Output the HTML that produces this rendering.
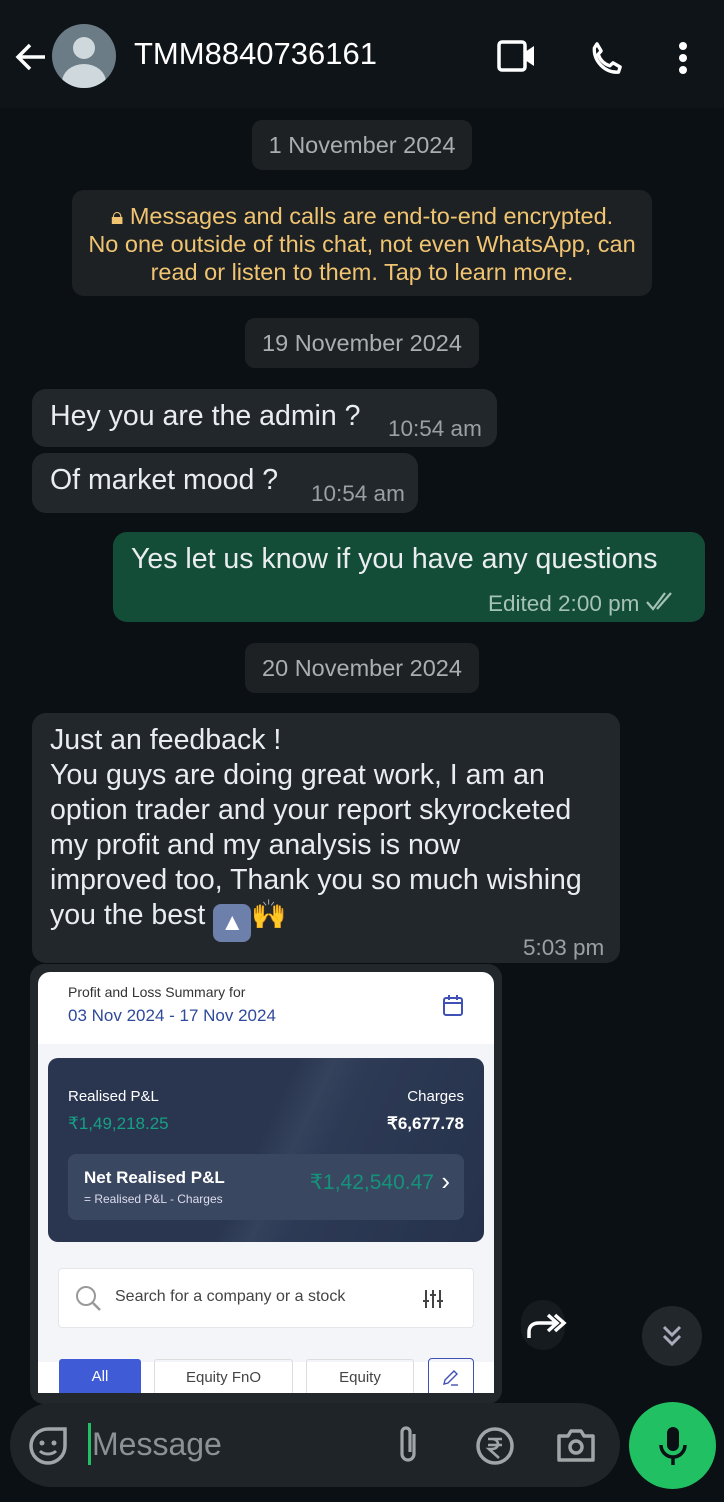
<!DOCTYPE html>
<html><head><meta charset="utf-8"><style>
*{margin:0;padding:0;box-sizing:border-box}
body{width:724px;height:1502px;background:#0b1014;font-family:"Liberation Sans","Noto Sans CJK JP",sans-serif;position:relative;overflow:hidden;color:#e9edef}
.a{position:absolute}
.chip{position:absolute;background:#1d2124;color:#a9aeb1;font-size:23.5px;border-radius:10px;text-align:center;line-height:50px}
.in{position:absolute;background:#22272b;border-radius:14px;color:#e9edef;font-size:28.5px}
.t{position:absolute;color:#9aa0a4;font-size:22.5px}
</style></head><body>
<div class="a" style="left:0;top:0;width:724px;height:108px;background:#0f1418"></div>
<svg class="a" style="top:40px;left:14px" width="34" height="34" viewBox="0 0 34 34"><path d="M31 17H5M16 5L4 17l12 12" stroke="#fff" stroke-width="3.5" fill="none"/></svg>
<div class="a" style="left:52px;top:24px;width:64px;height:64px;border-radius:50%;background:#6b7c86;overflow:hidden">
<div class="a" style="left:21px;top:13px;width:22px;height:22px;border-radius:50%;background:#cfd8dc"></div>
<div class="a" style="left:10px;top:40px;width:44px;height:36px;border-radius:50%;background:#cfd8dc"></div></div>
<div class="a" style="left:134px;top:36px;font-size:31px;color:#fff">TMM8840736161</div>
<svg class="a" style="left:496px;top:38px" width="42" height="36" viewBox="0 0 42 36"><rect x="3" y="4" width="26" height="28" rx="3" stroke="#fff" stroke-width="3.5" fill="none"/><path d="M29 14l9-6v20l-9-6z" fill="#fff"/></svg>
<svg class="a" style="left:586px;top:38px" width="40" height="40" viewBox="0 0 24 24"><path d="M6.6 3.5l2.5 4.3-1.8 2a11 11 0 0 0 6.9 6.9l2-1.8 4.3 2.5-1 3.1c-8 .5-15-6.5-14.5-14.5z" stroke="#fff" stroke-width="2" fill="none" stroke-linejoin="round"/></svg>
<div class="a" style="left:679px;top:42px;width:8px;height:8px;border-radius:50%;background:#fff;box-shadow:0 12px 0 #fff,0 24px 0 #fff"></div>

<div class="chip" style="left:252px;top:120px;width:220px">1 November 2024</div>
<div class="a" style="left:72px;top:190px;width:580px;height:106px;background:#1d2124;border-radius:12px;color:#f0c471;font-size:23.5px;text-align:center;line-height:28px;padding-top:12px;white-space:nowrap">🔒︎ Messages and calls are end-to-end encrypted.<br>No one outside of this chat, not even WhatsApp, can<br>read or listen to them. Tap to learn more.</div>
<div class="chip" style="left:245px;top:318px;width:234px">19 November 2024</div>

<div class="in" style="left:32px;top:389px;width:465px;height:58px"><span class="a" style="left:18px;top:11px">Hey you are the admin ?</span><span class="t" style="left:356px;top:27px">10:54 am</span></div>
<div class="in" style="left:32px;top:453px;width:386px;height:60px"><span class="a" style="left:18px;top:11px">Of market mood ?</span><span class="t" style="left:279px;top:28px">10:54 am</span></div>
<div class="in" style="left:113px;top:532px;width:592px;height:90px;background:#144d37"><span class="a" style="left:18px;top:11px;white-space:nowrap">Yes let us know if you have any questions</span><span class="t" style="left:375px;top:59px;color:#a5c2b6">Edited 2:00 pm</span>
<svg class="a" style="left:532px;top:58px" width="32" height="22" viewBox="0 0 32 22"><path d="M2 12l6 7L20 3M12 19L26 3" stroke="#a5c2b6" stroke-width="2.2" fill="none"/></svg></div>
<div class="chip" style="left:245px;top:643px;width:234px">20 November 2024</div>

<div class="in" style="left:32px;top:713px;width:588px;height:250px;line-height:35px"><div class="a" style="left:18px;top:10px;width:570px;white-space:nowrap">Just an feedback !<br>You guys are doing great work, I am an<br>option trader and your report skyrocketed<br>my profit and my analysis is now<br>improved too, Thank you so much wishing<br>you the best <span style="display:inline-block;width:38px;height:38px;background:#6d7fab;border-radius:8px;vertical-align:-6px;text-align:center;color:#fff;font-size:24px;line-height:38px">▲</span>🙌</div><span class="t" style="left:491px;top:217px">5:03 pm</span></div>

<div class="in" style="left:30px;top:964px;width:472px;height:440px"></div>
<div class="a" style="left:38px;top:972px;width:456px;height:421px;background:#fff;border-radius:12px 12px 0 0;overflow:hidden">
<div class="a" style="left:30px;top:12px;font-size:14px;color:#333">Profit and Loss Summary for</div>
<div class="a" style="left:30px;top:34px;font-size:17px;color:#2f4a9a">03 Nov 2024 - 17 Nov 2024</div>
<svg class="a" style="left:404px;top:22px" width="22" height="24" viewBox="0 0 22 24"><rect x="2" y="4" width="18" height="17" rx="2" stroke="#3f51b5" stroke-width="2" fill="none"/><path d="M2 9h18M7 1v5M15 1v5" stroke="#3f51b5" stroke-width="2"/></svg>
<div class="a" style="left:0;top:72px;width:456px;height:318px;background:#f3f5f9"></div>
<div class="a" style="left:10px;top:86px;width:436px;height:184px;background:linear-gradient(115deg,#2a3650 48%,#35425c 55%,#2d3a55 62%,#26324b);border-radius:10px">
<div class="a" style="left:20px;top:30px;font-size:15px;color:#fff">Realised P&amp;L</div>
<div class="a" style="left:20px;top:56px;font-size:17px;color:#16a085">₹1,49,218.25</div>
<div class="a" style="right:20px;top:30px;font-size:15px;color:#fff">Charges</div>
<div class="a" style="right:20px;top:56px;font-size:17px;color:#fff;font-weight:bold">₹6,677.78</div>
<div class="a" style="left:20px;top:96px;width:396px;height:66px;background:#3a4761;border-radius:8px">
<div class="a" style="left:16px;top:14px;font-size:17px;color:#fff;font-weight:bold">Net Realised P&amp;L</div>
<div class="a" style="left:16px;top:38px;font-size:12px;color:#dde">= Realised P&amp;L - Charges</div>
<div class="a" style="right:30px;top:16px;font-size:21px;color:#14937a">₹1,42,540.47</div>
<div class="a" style="right:14px;top:12px;font-size:26px;color:#fff">›</div></div></div>
<div class="a" style="left:20px;top:296px;width:416px;height:60px;background:#fff;border:1px solid #e4e6ea;border-radius:4px">
<svg class="a" style="left:16px;top:16px" width="28" height="28" viewBox="0 0 28 28"><circle cx="11" cy="11" r="9" stroke="#999" stroke-width="2" fill="none"/><path d="M18 18l7 7" stroke="#999" stroke-width="2.5"/></svg>
<div class="a" style="left:56px;top:19px;font-size:16px;color:#444">Search for a company or a stock</div>
<svg class="a" style="left:362px;top:18px" width="24" height="24" viewBox="0 0 24 24"><path d="M5 3v18M12 3v18M19 3v18" stroke="#444" stroke-width="2"/><path d="M2 14h6M9 8h6M16 14h6" stroke="#444" stroke-width="2"/></svg></div>
<div class="a" style="left:21px;top:387px;width:82px;height:40px;background:#3f5bd6;border-radius:3px;color:#fff;font-size:15px;text-align:center;line-height:36px">All</div>
<div class="a" style="left:116px;top:387px;width:139px;height:40px;border:1px solid #ddd;border-radius:3px;color:#444;font-size:15px;text-align:center;line-height:36px">Equity FnO</div>
<div class="a" style="left:268px;top:387px;width:108px;height:40px;border:1px solid #ddd;border-radius:3px;color:#444;font-size:15px;text-align:center;line-height:36px">Equity</div>
<div class="a" style="left:390px;top:386px;width:46px;height:40px;border:1.5px solid #3f51b5;border-radius:4px">
<svg class="a" style="left:12px;top:9px" width="20" height="20" viewBox="0 0 20 20"><path d="M3 16l1-4L13 3l3 3-9 9z" stroke="#3f51b5" stroke-width="1.4" fill="none"/><path d="M10 17h7" stroke="#3f51b5" stroke-width="1.4"/></svg></div>
</div>

<div class="a" style="left:521px;top:1300px;width:44px;height:50px;border-radius:22px;background:#151b1f"></div>
<svg class="a" style="left:522px;top:1306px" width="46" height="40" viewBox="0 0 46 40"><path d="M7 32v-6c0-6 4-9 10-9h16M26 9l9 8-9 8M33 9l9 8-9 8" stroke="#fff" stroke-width="3.5" fill="none"/></svg>
<div class="a" style="left:642px;top:1306px;width:60px;height:60px;border-radius:50%;background:#22272b"></div>
<svg class="a" style="left:658px;top:1322px" width="28" height="28" viewBox="0 0 28 28"><path d="M6 5l8 8 8-8M6 14l8 8 8-8" stroke="#aab" stroke-width="3" fill="none"/></svg>

<div class="a" style="left:10px;top:1403px;width:610px;height:84px;border-radius:42px;background:#1f2428"></div>
<svg class="a" style="left:28px;top:1426px" width="40" height="40" viewBox="0 0 40 40"><path d="M20 3a17 17 0 1 0 17 17V3z" stroke="#a0a5a8" stroke-width="3.5" fill="none"/><circle cx="14" cy="17" r="2.5" fill="#a0a5a8"/><circle cx="26" cy="17" r="2.5" fill="#a0a5a8"/><path d="M12 25c4 4 12 4 16 0" stroke="#a0a5a8" stroke-width="3" fill="none"/></svg>
<div class="a" style="left:88px;top:1423px;width:3px;height:42px;background:#21c063"></div>
<div class="a" style="left:92px;top:1426px;font-size:32px;color:#8b9194">Message</div>
<svg class="a" style="left:394px;top:1424px" width="30" height="42" viewBox="0 0 30 42"><path d="M20 10v20a6 6 0 0 1-12 0V8a4 4 0 0 1 8 0v20" stroke="#a0a5a8" stroke-width="3.2" fill="none"/></svg>
<svg class="a" style="left:475px;top:1426px" width="40" height="40" viewBox="0 0 40 40"><circle cx="20" cy="20" r="17" stroke="#a0a5a8" stroke-width="3.5" fill="none"/><path d="M13 13h14M13 19h14M17 13c8 0 8 10 0 10h-3l10 9" stroke="#a0a5a8" stroke-width="2.6" fill="none"/></svg>
<svg class="a" style="left:556px;top:1426px" width="40" height="38" viewBox="0 0 40 38"><path d="M3 10h9l3-5h10l3 5h9v24H3z" stroke="#a0a5a8" stroke-width="3.5" fill="none" stroke-linejoin="round"/><circle cx="20" cy="21" r="6" stroke="#a0a5a8" stroke-width="3.5" fill="none"/></svg>
<div class="a" style="left:629px;top:1402px;width:87px;height:87px;border-radius:50%;background:#21c063"></div>
<svg class="a" style="left:654px;top:1425px" width="38" height="42" viewBox="0 0 38 42"><rect x="13" y="2" width="12" height="24" rx="6" fill="#0b1014"/><path d="M7 20a12 12 0 0 0 24 0M19 32v8" stroke="#0b1014" stroke-width="3.5" fill="none"/></svg>
</body></html>
